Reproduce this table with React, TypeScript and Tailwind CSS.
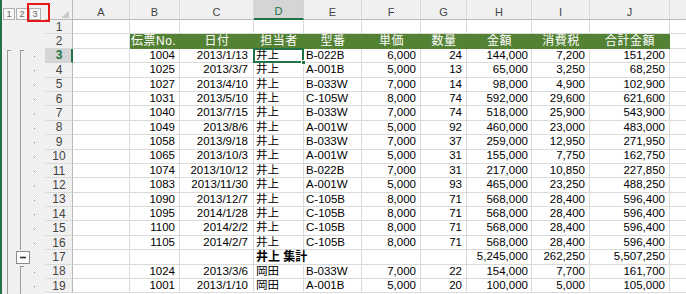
import React from 'react';

const CHECKER =
  'bg-[repeating-conic-gradient(#e9e9e9_0%_25%,#f8f8f8_0%_50%)] bg-[length:2px_2px]';

const COLS = [
  { k: 'A', w: 'w-[57px]', a: 'justify-end pr-[4px]' },
  { k: 'B', w: 'w-[50px]', a: 'justify-end pr-[4px]' },
  { k: 'C', w: 'w-[74px]', a: 'justify-end pr-[5px]' },
  { k: 'D', w: 'w-[50px]', a: 'justify-start pl-[2px]' },
  { k: 'E', w: 'w-[58px]', a: 'justify-start pl-[2px]' },
  { k: 'F', w: 'w-[59px]', a: 'justify-end pr-[4px]' },
  { k: 'G', w: 'w-[46px]', a: 'justify-end pr-[4px]' },
  { k: 'H', w: 'w-[65px]', a: 'justify-end pr-[3px]' },
  { k: 'I', w: 'w-[58px]', a: 'justify-end pr-[4px]' },
  { k: 'J', w: 'w-[80px]', a: 'justify-end pr-[4px]' },
];

const HEAD = ['伝票No.', '日付', '担当者', '型番', '単価', '数量', '金額', '消費税', '合計金額'];

// B..J for each row, row 3 onwards
const DATA: string[][] = [
  ['1004', '2013/1/13', '井上', 'B-022B', '6,000', '24', '144,000', '7,200', '151,200'],
  ['1025', '2013/3/7', '井上', 'A-001B', '5,000', '13', '65,000', '3,250', '68,250'],
  ['1027', '2013/4/10', '井上', 'B-033W', '7,000', '14', '98,000', '4,900', '102,900'],
  ['1031', '2013/5/10', '井上', 'C-105W', '8,000', '74', '592,000', '29,600', '621,600'],
  ['1040', '2013/7/15', '井上', 'B-033W', '7,000', '74', '518,000', '25,900', '543,900'],
  ['1049', '2013/8/6', '井上', 'A-001W', '5,000', '92', '460,000', '23,000', '483,000'],
  ['1058', '2013/9/18', '井上', 'B-033W', '7,000', '37', '259,000', '12,950', '271,950'],
  ['1065', '2013/10/3', '井上', 'A-001W', '5,000', '31', '155,000', '7,750', '162,750'],
  ['1074', '2013/10/12', '井上', 'B-022B', '7,000', '31', '217,000', '10,850', '227,850'],
  ['1083', '2013/11/30', '井上', 'A-001W', '5,000', '93', '465,000', '23,250', '488,250'],
  ['1090', '2013/12/7', '井上', 'C-105B', '8,000', '71', '568,000', '28,400', '596,400'],
  ['1095', '2014/1/28', '井上', 'C-105B', '8,000', '71', '568,000', '28,400', '596,400'],
  ['1100', '2014/2/2', '井上', 'C-105B', '8,000', '71', '568,000', '28,400', '596,400'],
  ['1105', '2014/2/7', '井上', 'C-105B', '8,000', '71', '568,000', '28,400', '596,400'],
  ['', '', '井上 集計', '', '', '', '5,245,000', '262,250', '5,507,250'],
  ['1024', '2013/3/6', '岡田', 'B-033W', '7,000', '22', '154,000', '7,700', '161,700'],
  ['1001', '2013/1/10', '岡田', 'A-001B', '5,000', '20', '100,000', '5,000', '105,000'],
];

const RH = 14.4;

function OutlineBars() {
  const detail = [3, 4, 5, 6, 7, 8, 9, 10, 11, 12, 13, 14, 15, 16, 18, 19];
  return (
    <svg width="43" height="274" viewBox="0 0 43 274" className="block">
      {/* level 1 */}
      <path d="M5.5 30.5H9M5.5 30V274" stroke="#9b9b9b" fill="none" />
      {/* level 2 */}
      <path d="M18.5 30.5H22M18.5 30V230" stroke="#9b9b9b" fill="none" />
      <rect x="14.5" y="231.5" width="13" height="12" fill="#fbfbfb" stroke="#8c8c8c" />
      <path d="M18 237.5H24" stroke="#333" strokeWidth="1.6" />
      <path d="M18.5 246.5H22M18.5 246V274" stroke="#9b9b9b" fill="none" />
      {detail.map((r) => (
        <rect key={r} x="32" y={(r - 1) * RH + 7} width="1" height="1" fill="#7d7d7d" />
      ))}
    </svg>
  );
}

export default function App() {
  return (
    <div className="relative flex h-[294px] w-[686px] overflow-hidden border-l-2 border-[#217346] bg-white font-['Liberation_Sans','Noto_Sans_CJK_JP',sans-serif] text-black">
      {/* outline gutter */}
      <div className={`flex w-[43px] shrink-0 flex-col ${CHECKER}`}>
        <div className="flex h-[20px] shrink-0 gap-[1px] pl-[1px] pt-[8px]">
          {['1', '2', '3'].map((n) => (
            <div
              key={n}
              className="flex h-[12px] w-[12px] items-center justify-center border border-[#b0b0b0] bg-[#f7f7f7] text-[9px] leading-none text-[#666]"
            >
              {n}
            </div>
          ))}
        </div>
        <OutlineBars />
      </div>

      {/* sheet */}
      <div className="flex min-w-0 flex-1 flex-col">
        <div className="flex h-[20px] shrink-0 text-[11px] leading-none text-[#444]">
          <div className={`flex w-[28px] shrink-0 items-end justify-end border-r border-b border-[#b9b9b9] pr-[3px] pb-[1px] ${CHECKER}`}>
            <svg width="8" height="7" viewBox="0 0 8 7">
              <polygon points="8,0 8,7 0,7" fill="#c9c9c9" />
            </svg>
          </div>
          {COLS.map((c) =>
            c.k === 'D' ? (
              <div
                key={c.k}
                className={`${c.w} flex shrink-0 items-center justify-center border-r border-r-[#d2d2d2] border-b-2 border-b-[#217346] bg-[#d5d5d5] pt-[5px] text-[#217346]`}
              >
                {c.k}
              </div>
            ) : (
              <div
                key={c.k}
                className={`${c.w} flex shrink-0 items-center justify-center border-r border-r-[#d9d9d9] border-b border-b-[#b9b9b9] pt-[5px] ${CHECKER}`}
              >
                {c.k}
              </div>
            ),
          )}
          <div className={`flex-1 border-b border-b-[#b9b9b9] ${CHECKER}`} />
        </div>

        {Array.from({ length: 19 }, (_, i) => i + 1).map((r) => {
          const vals = r >= 3 ? DATA[r - 3] : null;
          return (
            <div key={r} className="flex h-[14.4px] shrink-0 text-[11.5px] leading-none">
              {r === 3 ? (
                <div className="flex w-[28px] shrink-0 items-center justify-center border-r-2 border-b border-r-[#217346] border-b-[#d0d0d0] bg-[#d5d5d5] pl-[2px] text-[12px] font-semibold text-[#217346]">
                  {r}
                </div>
              ) : (
                <div className={`flex w-[28px] shrink-0 items-center justify-center border-r border-b border-r-[#b9b9b9] border-b-[#d9d9d9] pl-[1px] text-[12px] text-[#444] ${CHECKER}`}>
                  {r}
                </div>
              )}
              {COLS.map((c, ci) => {
                if (r === 2 && ci > 0) {
                  return (
                    <div
                      key={c.k}
                      className={`${c.w} flex shrink-0 items-center whitespace-nowrap border-b border-[#548235] bg-[#548235] text-[12px] tracking-[0.5px] text-white ${ci === 1 ? 'justify-start pl-[1px]' : 'justify-center'}`}
                    >
                      {HEAD[ci - 1]}
                    </div>
                  );
                }
                const v = vals && ci > 0 ? vals[ci - 1] : '';
                const sub = r === 17 && c.k === 'D';
                const sel = r === 3 && c.k === 'D';
                return (
                  <div
                    key={c.k}
                    className={`${c.w} relative flex shrink-0 items-center whitespace-nowrap border-b border-b-[#dadada] ${sub ? 'z-10 border-r border-r-transparent font-bold text-[12px]' : 'border-r border-r-[#dadada]'} ${c.a}`}
                  >
                    {v}
                    {sel && (
                      <>
                        <div className="absolute -top-[1px] -right-[1px] -bottom-[1px] -left-[1px] z-10 border-2 border-[#217346]" />
                        <div className="absolute -right-[3px] -bottom-[3px] z-20 h-[5px] w-[5px] border border-white bg-[#217346]" />
                      </>
                    )}
                  </div>
                );
              })}
              <div className="flex-1 border-b border-b-[#dadada]" />
            </div>
          );
        })}
      </div>

      {/* red annotation around level button 3 */}
      <div className="absolute top-[3px] left-[25px] h-[19px] w-[23px] border-2 border-[#e3191c]" />
    </div>
  );
}
